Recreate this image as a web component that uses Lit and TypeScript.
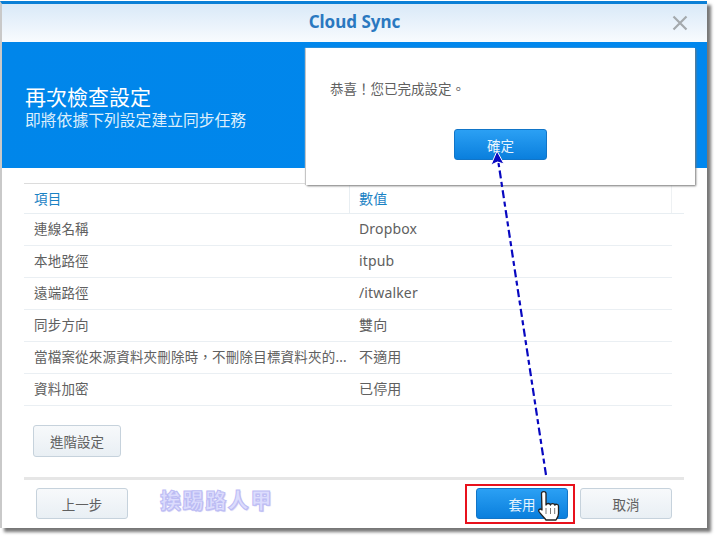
import { LitElement, html, css } from "lit";
import { customElement } from "lit/decorators.js";

const rows: [string, string][] = [
  ["連線名稱", "Dropbox"],
  ["本地路徑", "itpub"],
  ["遠端路徑", "/itwalker"],
  ["同步方向", "雙向"],
  ["當檔案從來源資料夾刪除時，不刪除目標資料夾的...", "不適用"],
  ["資料加密", "已停用"],
];

@customElement("app-root")
export class AppRoot extends LitElement {
  static styles = css`
    :host {
      display: block;
      position: relative;
      width: 716px;
      height: 537px;
      overflow: hidden;
      background: #fff;
      font-family: "Noto Sans", "Noto Sans CJK TC", sans-serif;
      font-size: 13.5px;
      color: #606060;
    }
    .page {
      padding: 1px 9px 0 0;
      height: 527px;
    }
    .window {
      box-sizing: border-box;
      height: 527px;
      display: flex;
      flex-direction: column;
      border-top: 3px solid #0a7fd6;
      border-left: 2px solid #c9c9c9;
      background: #fff;
      box-shadow: 4px 4px 3px #777;
    }
    .title {
      height: 38px;
      flex: none;
      box-sizing: border-box;
      padding-bottom: 3px;
      display: flex;
      align-items: center;
      justify-content: center;
      position: relative;
      background: linear-gradient(#d9e9f8, #f8fbfe);
      color: #2a78c0;
      font-weight: 700;
      font-size: 17px;
    }
    .close {
      position: absolute;
      right: 19px;
      top: 11px;
      width: 16px;
      height: 16px;
    }
    .banner {
      height: 126px;
      flex: none;
      box-sizing: border-box;
      padding: 42px 0 0 23px;
      background: linear-gradient(100deg, #0086ea, #0087ee);
      color: #fff;
    }
    .banner h1 {
      margin: 0;
      font-size: 21px;
      font-weight: 400;
      line-height: 26px;
    }
    .banner p {
      margin: 0;
      font-size: 15.8px;
      line-height: 20px;
      color: #dceefc;
    }
    .content {
      flex: 1;
      padding: 15px 22px 0;
      display: flex;
      flex-direction: column;
    }
    .thead {
      width: 660px;
      border-top: 1px solid #dcdcdc;
      border-bottom: 1px solid #e8eef2;
    }
    .tr {
      display: grid;
      grid-template-columns: 325px 323px;
      width: 648px;
      height: 32px;
      box-sizing: border-box;
      border-bottom: 1px solid #eaeff3;
      align-items: center;
    }
    .thead .tr {
      height: 29px;
      border-bottom: 0;
      color: #1a82c4;
      border-right: 1px solid #eef1f3;
    }
    .tr span {
      padding: 0 0 2px 10px;
      white-space: nowrap;
      line-height: 20px;
      letter-spacing: 0.2px;
    }
    .thead .tr span {
      padding-bottom: 0;
    }
    .thead .tr span + span {
      border-left: 1px solid #e8eef2;
      height: 29px;
      line-height: 29px;
      padding-left: 9px;
    }
    .tr span + span {
      padding-left: 10px;
      font-size: 14px;
      letter-spacing: 0.15px;
    }
    .btn {
      box-sizing: border-box;
      display: flex;
      align-items: center;
      justify-content: center;
      height: 31px;
      width: 92px;
      border: 1px solid #c6d2dc;
      border-radius: 3px;
      background: linear-gradient(#f7f9fb, #e9eff4);
      color: #606060;
      font-size: 13.5px;
    }
    .adv {
      width: 88px;
      height: 32px;
      margin: 19px 0 0 9px;
    }
    .footer {
      width: 660px;
      margin: 0 0 0 22px;
      flex: none;
      height: 51px;
      box-sizing: border-box;
      border-top: 3px solid #e6e6e6;
      padding: 8px 12px 0;
      display: flex;
      align-items: flex-start;
      gap: 12px;
    }
    .mark {
      margin-left: 20px;
      font-size: 21px;
      font-weight: 900;
      letter-spacing: 1.6px;
      line-height: 24px;
      color: #dcdcfd;
      -webkit-text-stroke: 1px #bcbcf4;
      text-shadow: 1px 1px 1px #c4c4f4;
    }
    .spacer {
      flex: 1;
    }
    .primary {
      border-color: #1175c8;
      background: linear-gradient(#2ba0f4, #0a7fdd);
      color: #e8f4fe;
    }
    .dialog {
      position: absolute;
      left: 306px;
      top: 48px;
      width: 389px;
      height: 137px;
      box-sizing: border-box;
      background: #fff;
      box-shadow: 1px 1px 2px #777, -1px 0 1px #ccc;
      padding: 31px 24px 0;
      display: flex;
      flex-direction: column;
    }
    .dialog p {
      margin: 0;
      height: 19px;
      line-height: 19px;
      font-size: 13.5px;
      font-family: "Noto Sans CJK TC", sans-serif;
    }
    .dialog .primary {
      align-self: center;
      width: 93px;
      margin: 31px 0 0 0;
    }
    .redbox {
      position: absolute;
      left: 465px;
      top: 484px;
      width: 110px;
      height: 40px;
      box-sizing: border-box;
      border: 2px solid #e8111c;
    }
    .overlay {
      position: absolute;
      left: 0;
      top: 0;
      pointer-events: none;
    }
  `;

  render() {
    return html`
      <div lang="zh-TW">
        <div class="page">
          <div class="window">
            <div class="title">
              Cloud Sync
              <svg class="close" viewBox="0 0 16 16">
                <path d="M1.5 1.5 14.5 14.5M14.5 1.5 1.5 14.5" stroke="#a4a9ad" stroke-width="2.2" fill="none" />
              </svg>
            </div>
            <div class="banner">
              <h1>再次檢查設定</h1>
              <p>即將依據下列設定建立同步任務</p>
            </div>
            <div class="content">
              <div class="thead">
                <div class="tr"><span>項目</span><span>數值</span></div>
              </div>
              ${rows.map(([a, b]) => html`<div class="tr"><span>${a}</span><span>${b}</span></div>`)}
              <div class="btn adv">進階設定</div>
            </div>
            <div class="footer">
              <div class="btn">上一步</div>
              <div class="mark">挨踢路人甲</div>
              <div class="spacer"></div>
              <div class="btn primary">套用</div>
              <div class="btn">取消</div>
            </div>
          </div>
        </div>
        <div class="dialog">
          <p>恭喜！您已完成設定。</p>
          <div class="btn primary">確定</div>
        </div>
      </div>
      <div class="redbox"></div>
      <svg class="overlay" width="716" height="537" viewBox="0 0 716 537">
        <path d="M546 475 498.500 163" stroke="#0808c0" stroke-width="2.200" stroke-dasharray="8 3.500 5 3.500" fill="none" />
        <path d="M497 151 504 164 497.500 162 491 165Z" fill="#0808c0" stroke="#fff" stroke-width="1" />
        <g transform="translate(-1 -1)">
          <path
            d="M542.500 494.500c0-2.500 4.500-2.500 4.500 0V506c.5-2 4-2 4.500 0 .3-1.800 4-1.800 4.300.2.500-1.500 3.700-1.200 3.700.8v7.500c0 3-1.500 5-2.500 6.500h-10c-1.500-2-5.500-6-7-8.500-1-1.800 1.200-3.300 2.800-1.800l.2.300Z"
            fill="#fff"
            stroke="#222"
            stroke-width="1.300"
            stroke-linejoin="round"
          />
          <path d="M547 509v6M551.500 509v6M555.700 509v6" stroke="#555" stroke-width="0.800" />
        </g>
      </svg>
    `;
  }
}
